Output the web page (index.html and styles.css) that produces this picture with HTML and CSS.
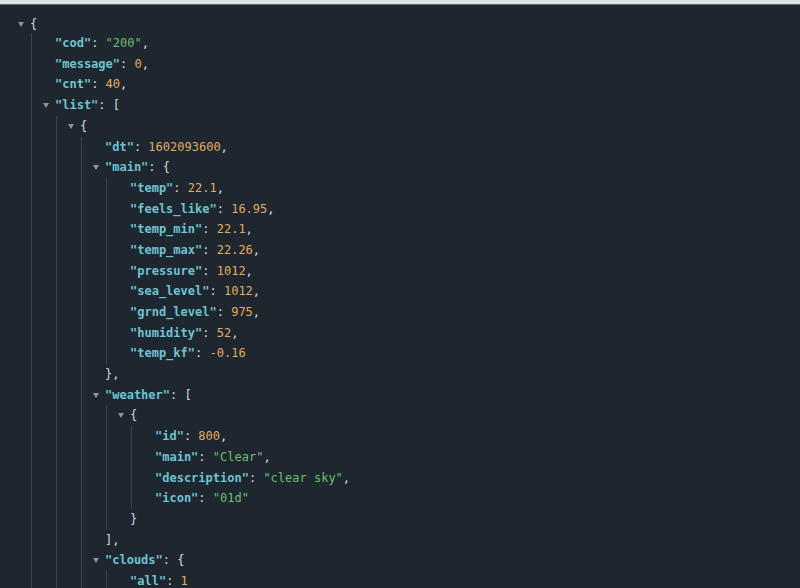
FILE: index.html
```html
<!DOCTYPE html>
<html lang="en">
<head>
<meta charset="utf-8">
<title>JSON</title>
<link rel="stylesheet" href="styles.css">
</head>
<body>
<div class="topbar"></div>
<main class="viewer">
  <div class="line root"><span class="tog"></span><span class="p">{</span></div>
  <div class="kids">
    <div class="line"><span class="k">"cod"</span><span class="p">: </span><span class="s">"200"</span><span class="p">,</span></div>
    <div class="line"><span class="k">"message"</span><span class="p">: </span><span class="n">0</span><span class="p">,</span></div>
    <div class="line"><span class="k">"cnt"</span><span class="p">: </span><span class="n">40</span><span class="p">,</span></div>
    <div class="line"><span class="tog"></span><span class="k">"list"</span><span class="p">: [</span></div>
    <div class="kids">
      <div class="line"><span class="tog"></span><span class="p">{</span></div>
      <div class="kids">
        <div class="line"><span class="k">"dt"</span><span class="p">: </span><span class="n">1602093600</span><span class="p">,</span></div>
        <div class="line"><span class="tog"></span><span class="k">"main"</span><span class="p">: {</span></div>
        <div class="kids">
          <div class="line"><span class="k">"temp"</span><span class="p">: </span><span class="n">22.1</span><span class="p">,</span></div>
          <div class="line"><span class="k">"feels_like"</span><span class="p">: </span><span class="n">16.95</span><span class="p">,</span></div>
          <div class="line"><span class="k">"temp_min"</span><span class="p">: </span><span class="n">22.1</span><span class="p">,</span></div>
          <div class="line"><span class="k">"temp_max"</span><span class="p">: </span><span class="n">22.26</span><span class="p">,</span></div>
          <div class="line"><span class="k">"pressure"</span><span class="p">: </span><span class="n">1012</span><span class="p">,</span></div>
          <div class="line"><span class="k">"sea_level"</span><span class="p">: </span><span class="n">1012</span><span class="p">,</span></div>
          <div class="line"><span class="k">"grnd_level"</span><span class="p">: </span><span class="n">975</span><span class="p">,</span></div>
          <div class="line"><span class="k">"humidity"</span><span class="p">: </span><span class="n">52</span><span class="p">,</span></div>
          <div class="line"><span class="k">"temp_kf"</span><span class="p">: </span><span class="n">-0.16</span></div>
        </div>
        <div class="line"><span class="p">},</span></div>
        <div class="line"><span class="tog"></span><span class="k">"weather"</span><span class="p">: [</span></div>
        <div class="kids">
          <div class="line"><span class="tog"></span><span class="p">{</span></div>
          <div class="kids">
            <div class="line"><span class="k">"id"</span><span class="p">: </span><span class="n">800</span><span class="p">,</span></div>
            <div class="line"><span class="k">"main"</span><span class="p">: </span><span class="s">"Clear"</span><span class="p">,</span></div>
            <div class="line"><span class="k">"description"</span><span class="p">: </span><span class="s">"clear sky"</span><span class="p">,</span></div>
            <div class="line"><span class="k">"icon"</span><span class="p">: </span><span class="s">"01d"</span></div>
          </div>
          <div class="line"><span class="p">}</span></div>
        </div>
        <div class="line"><span class="p">],</span></div>
        <div class="line"><span class="tog"></span><span class="k">"clouds"</span><span class="p">: {</span></div>
        <div class="kids">
          <div class="line"><span class="k">"all"</span><span class="p">: </span><span class="n">1</span></div>
        </div>
        <div class="line"><span class="p">},</span></div>
      </div>
    </div>
  </div>
</main>
</body>
</html>
```
FILE: styles.css
```css
html, body {
  margin: 0;
  padding: 0;
  height: 100%;
  overflow: hidden;
  background: #1e2730;
}

.topbar {
  height: 4px;
  background: #dfe1e3;
  border-bottom: 1px solid #5d646b;
}

.viewer {
  padding: 11px 0 20px 30px;
  font-family: "DejaVu Sans Mono", "Liberation Mono", monospace;
  font-size: 12px;
  color: #d4d8dc;
}

.line {
  height: 20.7px;
  line-height: 20.7px;
  white-space: pre;
}

.line.root {
  height: 17.1px;
  line-height: 17.1px;
}

.kids {
  margin-left: 1px;
  padding-left: 23px;
  border-left: 1px solid #3a444e;
}

.tog {
  display: inline-block;
  width: 0;
  height: 0;
  border-left: 3px solid transparent;
  border-right: 3px solid transparent;
  border-top: 5px solid #8c939a;
  margin-left: -12px;
  margin-right: 6px;
  margin-bottom: 1px;
  vertical-align: baseline;
}

.k {
  color: #6ec3d1;
  font-weight: bold;
}

.s {
  color: #6cbf6c;
}

.n {
  color: #e3ab5c;
}

.p {
  color: #d4d8dc;
}
```
